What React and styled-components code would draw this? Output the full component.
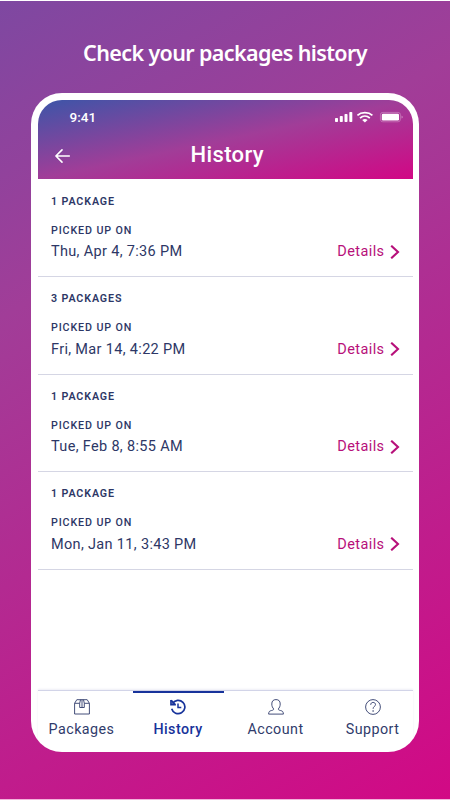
import React from 'react'
import styled, { createGlobalStyle } from 'styled-components'


const GlobalStyle = createGlobalStyle`
  * {
    box-sizing: border-box;
  }

  body {
    margin: 0;
    background: #fff;
    font-family: Roboto, 'Liberation Sans', sans-serif;
  }
`

const Page = styled.main`
  display: flex;
  flex-direction: column;
  align-items: center;
  width: 450px;
  height: 800px;
  border-top: 1px solid #fff;
  border-bottom: 1px solid #f3b5dc;
  background: linear-gradient(150deg, #7e48a1 0%, #a13d98 30%, #d20985 100%);
  overflow: hidden;
`

const Headline = styled.h1`
  height: 92px;
  margin: 0;
  padding-top: 36px;
  color: #fff;
  font-family: 'Noto Sans', 'Open Sans', sans-serif;
  font-size: 21.5px;
  font-weight: 600;
  line-height: 32px;
  letter-spacing: -0.62px;
  white-space: nowrap;
`

const Phone = styled.section`
  display: flex;
  flex-direction: column;
  width: 388px;
  height: 659px;
  padding: 6.5px 6px 0 6.5px;
  border-radius: 31px;
  background: #fff;
  overflow: hidden;
`

const Header = styled.header`
  height: 79.5px;
  border-radius: 24px 24px 0 0;
  background: linear-gradient(to bottom right, #3c55a8 0%, #a13d98 50%, #d20785 100%);
  color: #fff;
`

const StatusBar = styled.div`
  display: flex;
  align-items: center;
  justify-content: space-between;
  height: 35px;
  padding: 0 10px 0 32px;
  font-size: 13.5px;
  font-weight: 500;
`

const TitleBar = styled.div`
  display: grid;
  grid-template-columns: 50px 1fr 46px;
  align-items: center;
  height: 40px;
`

const BackButton = styled.button`
  display: flex;
  padding: 3px 0 0 17px;
  border: 0;
  background: none;
  color: inherit;
`

const Title = styled.h2`
  margin: 0;
  font-size: 22px;
  font-weight: 500;
  line-height: 40px;
  text-align: center;
  letter-spacing: 0.35px;
`

const List = styled.ul`
  flex: 1;
  margin: 0;
  padding: 0.5px 0 0;
  list-style: none;
`

const Row = styled.li`
  height: 97.5px;
  padding: 14px 13.5px 0 13.5px;
  border-bottom: 1px solid #d5d6e4;
  color: #2d3766;
`

const Label = styled.p`
  margin: 0 0 ${({ $gap }) => $gap}px;
  font-size: 10.7px;
  font-weight: ${({ $weight }) => $weight};
  line-height: 15px;
  letter-spacing: 0.88px;
`

const Pickup = styled.div`
  display: flex;
  align-items: center;
  justify-content: space-between;
  height: 24px;
  font-size: 14.5px;
  letter-spacing: 0.33px;
`

const Details = styled.a`
  display: flex;
  align-items: center;
  gap: 5px;
  color: #b7107a;
  letter-spacing: 0.4px;
`

const TabBar = styled.nav`
  display: grid;
  grid-template-columns: 88px 91px 90px 90px;
  column-gap: 7px;
  height: 62px;
  border-top: 1px solid #d2d4e8;
  box-shadow: 0 -1px 2px #eeeef6;
`

const Tab = styled.a`
  display: flex;
  flex-direction: column;
  align-items: center;
  padding-top: 6px;
  border-top: 2px solid ${({ $active }) => ($active ? '#17339b' : 'transparent')};
  color: ${({ $active }) => ($active ? '#17339b' : '#303b6b')};
  font-size: 14.3px;
  font-weight: ${({ $active }) => ($active ? 500 : 400)};
  line-height: 20px;
  letter-spacing: 0.45px;

  svg {
    display: block;
    margin-bottom: 4px;
  }
`

const StatusIcons = () => (
  <svg width="68" height="12" viewBox="0 0 68 12" fill="#fff">
    <rect x="0" y="7" width="3" height="4" rx="0.8" />
    <rect x="4.8" y="5" width="3" height="6" rx="0.8" />
    <rect x="9.5" y="3" width="3" height="8" rx="0.8" />
    <rect x="14.3" y="1" width="3" height="10" rx="0.8" />
    <g fill="none" stroke="#fff" strokeWidth="1.8">
      <path d="M22.4 4.4C26.4 .8 33.4 .8 37.4 4.4" />
      <path d="M25 7.1C27.9 4.5 31.9 4.5 34.8 7.1" />
    </g>
    <path d="M27.2 9Q29.9 7 32.6 9L29.9 11.5z" />
    <rect x="45.4" y="1.4" width="20" height="9.4" rx="2.4" fill="none" stroke="#fff" strokeOpacity=".35" strokeWidth=".8" />
    <rect x="46.8" y="2.8" width="17.2" height="6.7" rx="1.2" />
    <path d="M66.6 4.6q1 .5 1 1.5t-1 1.5z" fillOpacity=".5" />
  </svg>
)

const BackIcon = () => (
  <svg width="16" height="14" viewBox="0 0 16 14" fill="none" stroke="currentColor" strokeWidth="1.6" strokeLinecap="round" strokeLinejoin="round">
    <path d="M7 .9.9 7 7 13.1M.9 7h13.4" />
  </svg>
)

const ChevronIcon = () => (
  <svg width="10" height="14" viewBox="0 0 10 14" fill="none" stroke="currentColor" strokeWidth="2.1">
    <path d="M1.2.7 8 7l-6.8 6.3" />
  </svg>
)

const PackageIcon = () => (
  <svg width="16" height="16" viewBox="0 0 16 16" fill="none" stroke="currentColor" strokeWidth=".9" strokeLinejoin="round">
    <path d="M.6 4.3V15h14.8V4.3L13.2.7H2.8zM.6 4.3h5.1M10.3 4.3h5.1M6.5.7l-.8 3.6v4.2h4.6V4.3L9.5.7M8 .7v7.8" />
  </svg>
)

const HistoryIcon = () => (
  <svg width="16" height="16" viewBox="0 0 16 16" fill="none" stroke="currentColor" strokeWidth="1.7">
    <path d="M2.4 4.6a6.7 6.7 0 1 1-.7 5.1" />
    <path d="M1 .9v4.7h4.9" />
    <path d="M1.2 1.2l3.6 4.1" />
    <path d="M8 4.4v4h3.3" strokeWidth="1.5" />
  </svg>
)

const AccountIcon = () => (
  <svg width="16" height="16" viewBox="0 0 16 16" fill="none" stroke="currentColor" strokeWidth=".9" strokeLinejoin="round">
    <path d="M5.8 10C4.5 8.9 3.8 7 3.8 5 3.8 2 5.3.6 8 .6S12.2 2 12.2 5c0 2-.7 3.9-2 5 .2.9.9 1.2 2.2 1.5 2.2.5 2.8 1 3 3.6H.6c.2-2.6.8-3.1 3-3.6C4.9 11.2 5.6 10.9 5.8 10z" />
  </svg>
)

const SupportIcon = () => (
  <svg width="16" height="16" viewBox="0 0 16 16" fill="none" stroke="currentColor" strokeWidth=".9">
    <circle cx="8" cy="8" r="7.4" />
    <path d="M5.7 5.8c0-1.5 1-2.4 2.4-2.4s2.4.9 2.4 2.2c0 1.8-2.4 1.8-2.4 4.2" />
    <circle cx="8.1" cy="12" r=".8" fill="currentColor" stroke="none" />
  </svg>
)

const pickups = [
  { count: '1 PACKAGE', date: 'Thu, Apr 4, 7:36 PM' },
  { count: '3 PACKAGES', date: 'Fri, Mar 14, 4:22 PM' },
  { count: '1 PACKAGE', date: 'Tue, Feb 8, 8:55 AM' },
  { count: '1 PACKAGE', date: 'Mon, Jan 11, 3:43 PM' },
]

const tabs = [
  { name: 'Packages', Icon: PackageIcon },
  { name: 'History', Icon: HistoryIcon },
  { name: 'Account', Icon: AccountIcon },
  { name: 'Support', Icon: SupportIcon },
]

const App = () => {
  return (
    <Page>
      <GlobalStyle />
      <Headline>Check your packages history</Headline>
      <Phone>
        <Header>
          <StatusBar>
            <span>9:41</span>
            <StatusIcons />
          </StatusBar>
          <TitleBar>
            <BackButton aria-label="Back"><BackIcon /></BackButton>
            <Title>History</Title>
          </TitleBar>
        </Header>
        <List>
          {pickups.map(({ count, date }) => (
            <Row key={date}>
              <Label $weight={600} $gap={14}>{count}</Label>
              <Label $weight={500} $gap={2}>PICKED UP ON</Label>
              <Pickup>
                <span>{date}</span>
                <Details>Details <ChevronIcon /></Details>
              </Pickup>
            </Row>
          ))}
        </List>
        <TabBar>
          {tabs.map(({ name, Icon }) => (
            <Tab key={name} $active={name === 'History'}>
              <Icon />
              {name}
            </Tab>
          ))}
        </TabBar>
      </Phone>
    </Page>
  )
}

export default App
